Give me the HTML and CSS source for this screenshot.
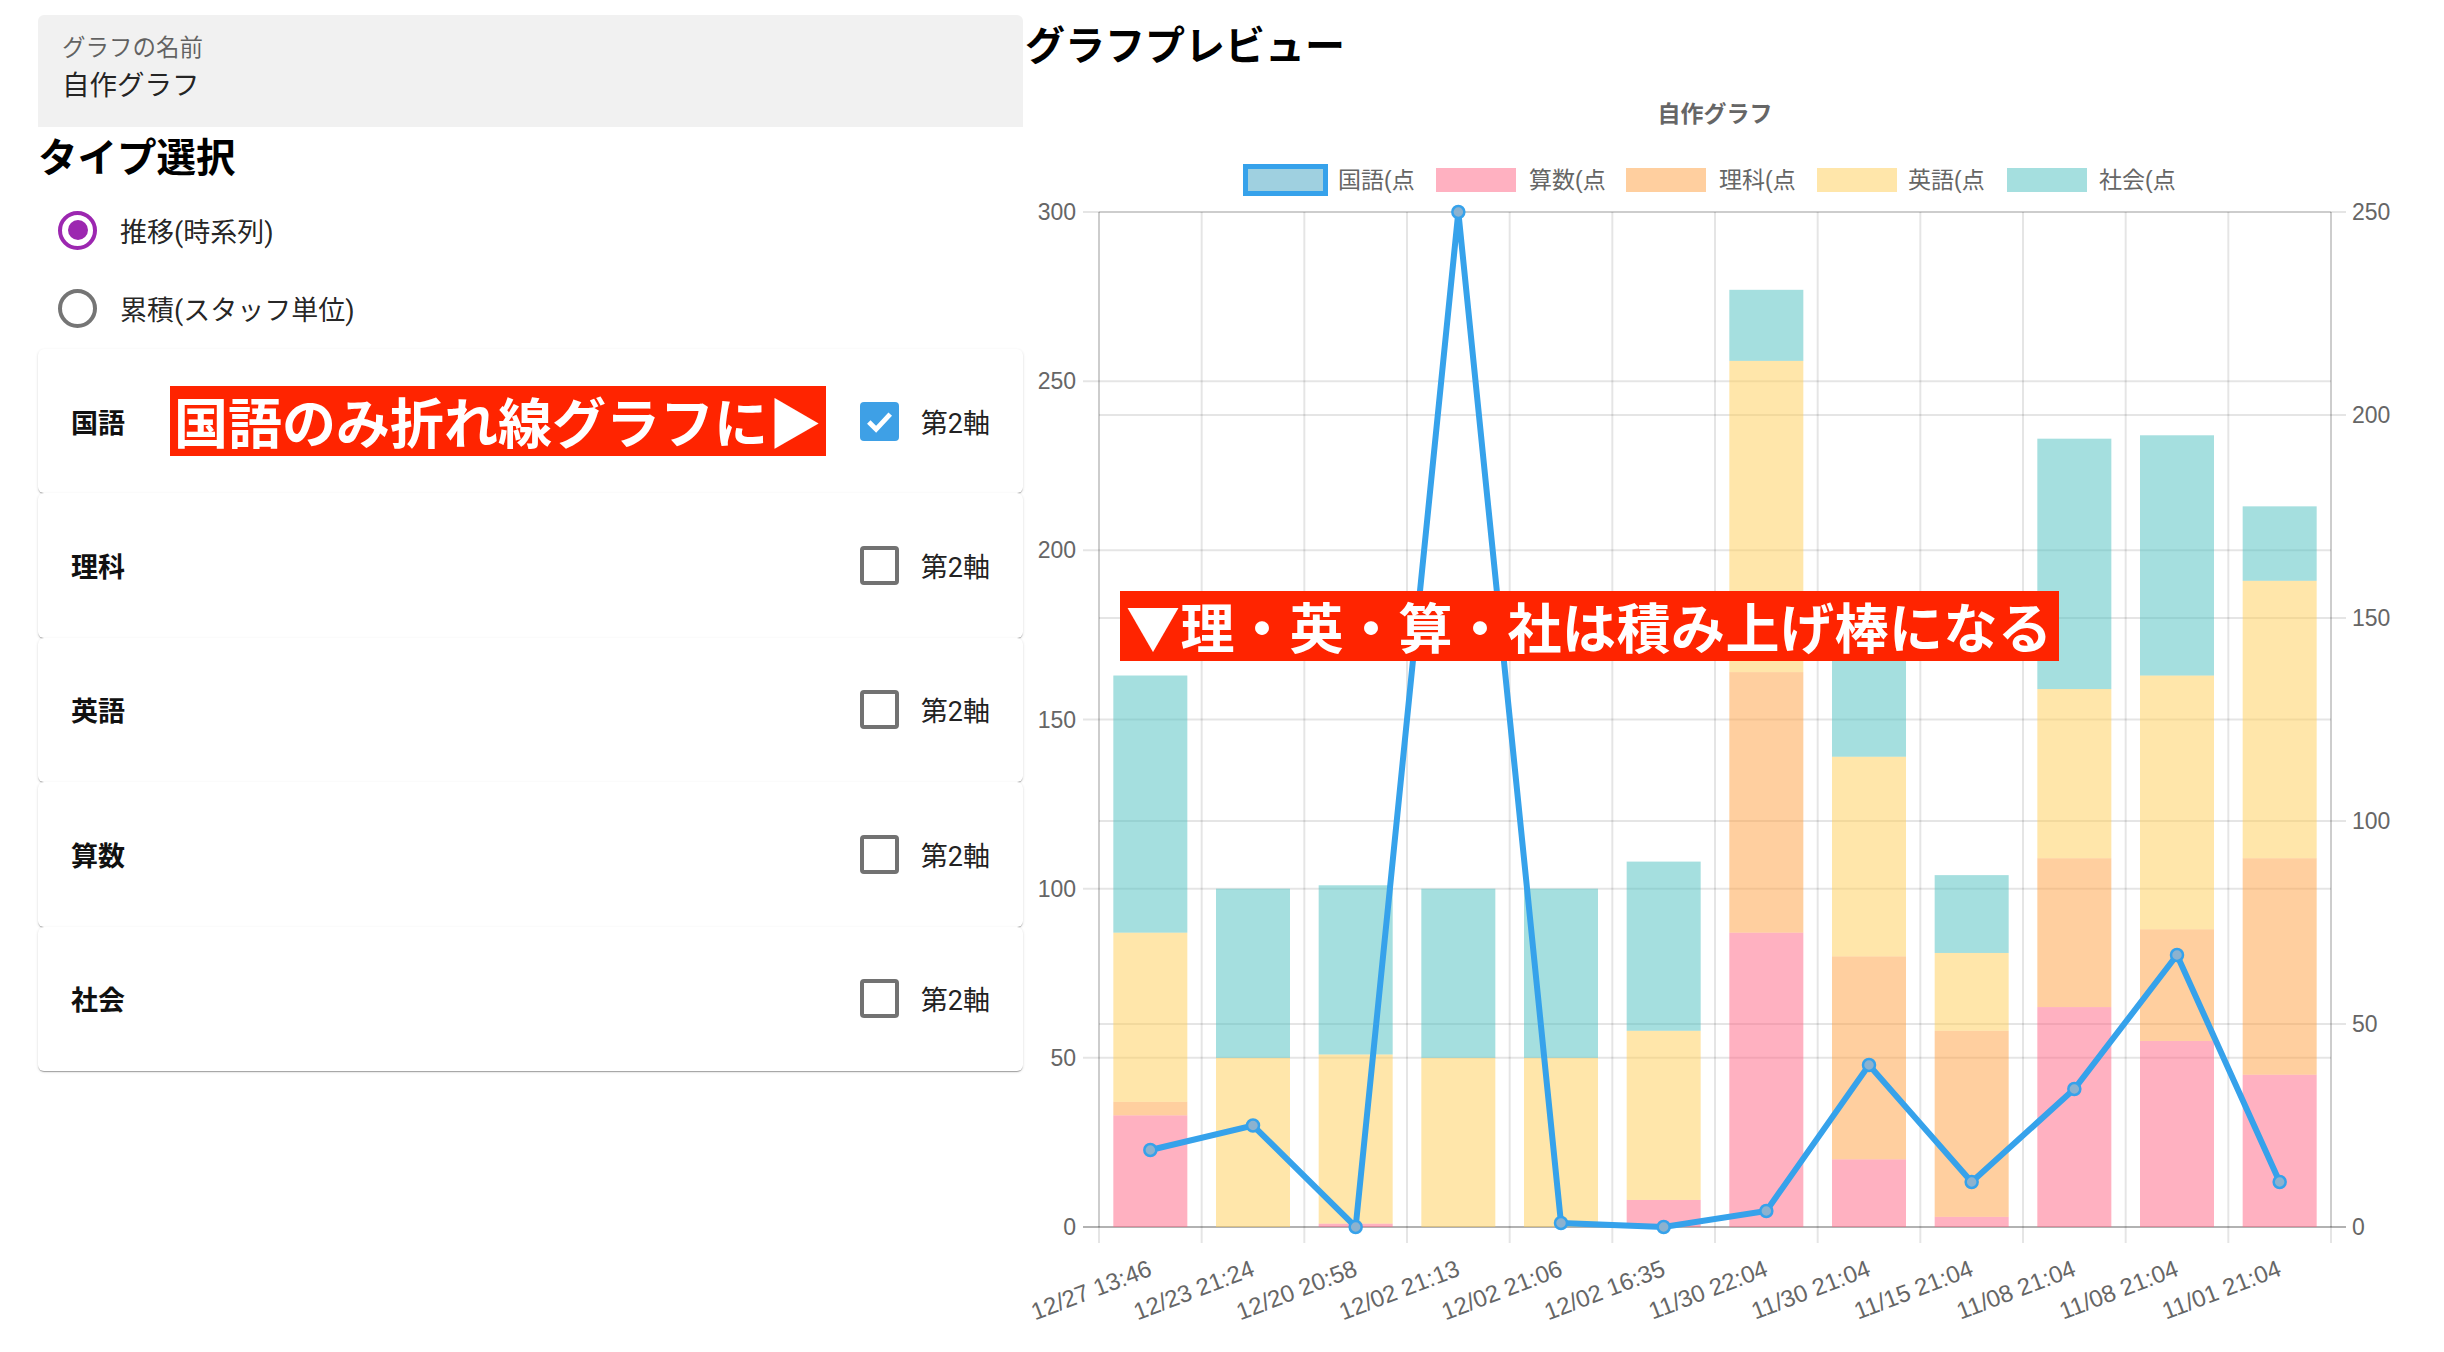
FILE: index.html
```html
<!DOCTYPE html>
<html lang="ja">
<head>
<meta charset="utf-8">
<title>グラフ設定</title>
<link rel="stylesheet" href="styles.css">
</head>
<body>
<div class="page">
  <div class="left">
    <div class="field">
      <div class="field-label">グラフの名前</div>
      <div class="field-value">自作グラフ</div>
    </div>
    <h2 class="section-title">タイプ選択</h2>
    <div class="radio-group">
      <div class="radio"><span class="radio-ring is-checked"><span class="radio-dot"></span></span><span class="radio-text">推移(時系列)</span></div>
      <div class="radio"><span class="radio-ring"></span><span class="radio-text">累積(スタッフ単位)</span></div>
    </div>
    <div class="cards">
      <div class="card">
        <span class="card-label">国語</span>
        <span class="banner">国語のみ折れ線グラフに▶</span>
        <span class="spacer"></span>
        <span class="checkbox is-checked"><svg class="check-icon" viewBox="0 0 40 40"><path d="M9 20.5 L16.5 28 L31 12.5" /></svg></span>
        <span class="axis-label">第2軸</span>
      </div>
      <div class="card">
        <span class="card-label">理科</span>
        <span class="spacer"></span>
        <span class="checkbox"></span>
        <span class="axis-label">第2軸</span>
      </div>
      <div class="card">
        <span class="card-label">英語</span>
        <span class="spacer"></span>
        <span class="checkbox"></span>
        <span class="axis-label">第2軸</span>
      </div>
      <div class="card">
        <span class="card-label">算数</span>
        <span class="spacer"></span>
        <span class="checkbox"></span>
        <span class="axis-label">第2軸</span>
      </div>
      <div class="card">
        <span class="card-label">社会</span>
        <span class="spacer"></span>
        <span class="checkbox"></span>
        <span class="axis-label">第2軸</span>
      </div>
    </div>
  </div>

  <div class="right">
    <h2 class="preview-title">グラフプレビュー</h2>
    <svg class="chart" width="1419" height="1258" viewBox="1025 94 1419 1258">
      <!-- title -->
      <text class="chart-title" x="1715" y="122" text-anchor="middle">自作グラフ</text>
      <!-- legend -->
      <rect x="1245.5" y="166.5" width="80" height="27" fill="#9fd0e0" stroke="#36a2eb" stroke-width="5"/>
      <text x="1338" y="188">国語(点</text>
      <rect x="1436" y="168" width="80" height="24" fill="#ffb1c1"/>
      <text x="1529" y="188">算数(点</text>
      <rect x="1626" y="168" width="80" height="24" fill="#ffcf9f"/>
      <text x="1719" y="188">理科(点</text>
      <rect x="1817" y="168" width="80" height="24" fill="#ffe6aa"/>
      <text x="1908" y="188">英語(点</text>
      <rect x="2007" y="168" width="80" height="24" fill="#a5dfdf"/>
      <text x="2099" y="188">社会(点</text>

      <!-- vertical grid -->
      <g class="grid">
        <line x1="1099" y1="212" x2="1099" y2="1243"/>
        <line x1="1201.67" y1="212" x2="1201.67" y2="1243"/>
        <line x1="1304.33" y1="212" x2="1304.33" y2="1243"/>
        <line x1="1407" y1="212" x2="1407" y2="1243"/>
        <line x1="1509.67" y1="212" x2="1509.67" y2="1243"/>
        <line x1="1612.33" y1="212" x2="1612.33" y2="1243"/>
        <line x1="1715" y1="212" x2="1715" y2="1243"/>
        <line x1="1817.67" y1="212" x2="1817.67" y2="1243"/>
        <line x1="1920.33" y1="212" x2="1920.33" y2="1243"/>
        <line x1="2023" y1="212" x2="2023" y2="1243"/>
        <line x1="2125.67" y1="212" x2="2125.67" y2="1243"/>
        <line x1="2228.33" y1="212" x2="2228.33" y2="1243"/>
        <line x1="2331" y1="212" x2="2331" y2="1243"/>
        <!-- axis borders -->
        <line x1="1099" y1="212" x2="1099" y2="1227"/>
        <line x1="2331" y1="212" x2="2331" y2="1227"/>
        <!-- left axis grid -->
        <line x1="1083" y1="212" x2="2331" y2="212"/>
        <line x1="1083" y1="381.17" x2="2331" y2="381.17"/>
        <line x1="1083" y1="550.33" x2="2331" y2="550.33"/>
        <line x1="1083" y1="719.5" x2="2331" y2="719.5"/>
        <line x1="1083" y1="888.67" x2="2331" y2="888.67"/>
        <line x1="1083" y1="1057.83" x2="2331" y2="1057.83"/>
        <!-- right axis grid -->
        <line x1="1099" y1="212" x2="2346" y2="212"/>
        <line x1="1099" y1="415" x2="2346" y2="415"/>
        <line x1="1099" y1="618" x2="2346" y2="618"/>
        <line x1="1099" y1="821" x2="2346" y2="821"/>
        <line x1="1099" y1="1024" x2="2346" y2="1024"/>
      </g>
      <line class="zero-line" x1="1083" y1="1227" x2="2346" y2="1227"/>

      <!-- y labels left -->
      <g class="ylabels-left" text-anchor="end">
        <text x="1076" y="220">300</text>
        <text x="1076" y="389">250</text>
        <text x="1076" y="558">200</text>
        <text x="1076" y="728">150</text>
        <text x="1076" y="897">100</text>
        <text x="1076" y="1066">50</text>
        <text x="1076" y="1235">0</text>
      </g>
      <g class="ylabels-right">
        <text x="2352" y="220">250</text>
        <text x="2352" y="423">200</text>
        <text x="2352" y="626">150</text>
        <text x="2352" y="829">100</text>
        <text x="2352" y="1032">50</text>
        <text x="2352" y="1235">0</text>
      </g>

      <!-- bars -->
      <g class="bars">
        <rect class="b-pink" x="1113.33" y="1115.35" width="74" height="111.65"/>
        <rect class="b-orange" x="1113.33" y="1101.82" width="74" height="13.53"/>
        <rect class="b-yellow" x="1113.33" y="932.65" width="74" height="169.17"/>
        <rect class="b-teal" x="1113.33" y="675.52" width="74" height="257.13"/>

        <rect class="b-yellow" x="1216" y="1057.83" width="74" height="169.17"/>
        <rect class="b-teal" x="1216" y="888.67" width="74" height="169.16"/>

        <rect class="b-pink" x="1318.67" y="1223.62" width="74" height="3.38"/>
        <rect class="b-yellow" x="1318.67" y="1054.45" width="74" height="169.17"/>
        <rect class="b-teal" x="1318.67" y="885.28" width="74" height="169.17"/>

        <rect class="b-yellow" x="1421.33" y="1057.83" width="74" height="169.17"/>
        <rect class="b-teal" x="1421.33" y="888.67" width="74" height="169.16"/>

        <rect class="b-yellow" x="1524" y="1057.83" width="74" height="169.17"/>
        <rect class="b-teal" x="1524" y="888.67" width="74" height="169.16"/>

        <rect class="b-pink" x="1626.67" y="1199.93" width="74" height="27.07"/>
        <rect class="b-yellow" x="1626.67" y="1030.77" width="74" height="169.16"/>
        <rect class="b-teal" x="1626.67" y="861.6" width="74" height="169.17"/>

        <rect class="b-pink" x="1729.33" y="932.65" width="74" height="294.35"/>
        <rect class="b-orange" x="1729.33" y="672.13" width="74" height="260.52"/>
        <rect class="b-yellow" x="1729.33" y="360.87" width="74" height="311.26"/>
        <rect class="b-teal" x="1729.33" y="289.82" width="74" height="71.05"/>

        <rect class="b-pink" x="1832" y="1159.33" width="74" height="67.67"/>
        <rect class="b-orange" x="1832" y="956.33" width="74" height="203"/>
        <rect class="b-yellow" x="1832" y="756.72" width="74" height="199.61"/>
        <rect class="b-teal" x="1832" y="634.92" width="74" height="121.8"/>

        <rect class="b-pink" x="1934.67" y="1216.85" width="74" height="10.15"/>
        <rect class="b-orange" x="1934.67" y="1030.77" width="74" height="186.08"/>
        <rect class="b-yellow" x="1934.67" y="952.95" width="74" height="77.82"/>
        <rect class="b-teal" x="1934.67" y="875.13" width="74" height="77.82"/>

        <rect class="b-pink" x="2037.33" y="1007.08" width="74" height="219.92"/>
        <rect class="b-orange" x="2037.33" y="858.22" width="74" height="148.86"/>
        <rect class="b-yellow" x="2037.33" y="689.05" width="74" height="169.17"/>
        <rect class="b-teal" x="2037.33" y="438.68" width="74" height="250.37"/>

        <rect class="b-pink" x="2140" y="1040.92" width="74" height="186.08"/>
        <rect class="b-orange" x="2140" y="929.27" width="74" height="111.65"/>
        <rect class="b-yellow" x="2140" y="675.52" width="74" height="253.75"/>
        <rect class="b-teal" x="2140" y="435.3" width="74" height="240.22"/>

        <rect class="b-pink" x="2242.67" y="1074.75" width="74" height="152.25"/>
        <rect class="b-orange" x="2242.67" y="858.22" width="74" height="216.53"/>
        <rect class="b-yellow" x="2242.67" y="580.78" width="74" height="277.44"/>
        <rect class="b-teal" x="2242.67" y="506.35" width="74" height="74.43"/>
      </g>

      <!-- line dataset -->
      <polyline class="line" points="1150.33,1150 1253,1125.5 1355.67,1227 1458.33,212 1561,1223 1663.67,1227 1766.33,1211 1869,1065 1971.67,1182 2074.33,1089 2177,955 2279.67,1182"/>
      <g class="points">
        <circle cx="1150.33" cy="1150" r="6"/>
        <circle cx="1253" cy="1125.5" r="6"/>
        <circle cx="1355.67" cy="1227" r="6"/>
        <circle cx="1458.33" cy="212" r="6"/>
        <circle cx="1561" cy="1223" r="6"/>
        <circle cx="1663.67" cy="1227" r="6"/>
        <circle cx="1766.33" cy="1211" r="6"/>
        <circle cx="1869" cy="1065" r="6"/>
        <circle cx="1971.67" cy="1182" r="6"/>
        <circle cx="2074.33" cy="1089" r="6"/>
        <circle cx="2177" cy="955" r="6"/>
        <circle cx="2279.67" cy="1182" r="6"/>
      </g>

      <!-- x labels -->
      <g class="xlabels" text-anchor="end">
        <text transform="translate(1153.33,1275) rotate(-21)">12/27 13:46</text>
        <text transform="translate(1256,1275) rotate(-21)">12/23 21:24</text>
        <text transform="translate(1358.67,1275) rotate(-21)">12/20 20:58</text>
        <text transform="translate(1461.33,1275) rotate(-21)">12/02 21:13</text>
        <text transform="translate(1564,1275) rotate(-21)">12/02 21:06</text>
        <text transform="translate(1666.67,1275) rotate(-21)">12/02 16:35</text>
        <text transform="translate(1769.33,1275) rotate(-21)">11/30 22:04</text>
        <text transform="translate(1872,1275) rotate(-21)">11/30 21:04</text>
        <text transform="translate(1974.67,1275) rotate(-21)">11/15 21:04</text>
        <text transform="translate(2077.33,1275) rotate(-21)">11/08 21:04</text>
        <text transform="translate(2180,1275) rotate(-21)">11/08 21:04</text>
        <text transform="translate(2282.67,1275) rotate(-21)">11/01 21:04</text>
      </g>
    </svg>
    <div class="banner banner-overlay">▼理・英・算・社は積み上げ棒になる</div>
  </div>
</div>
</body>
</html>
```

FILE: styles.css
```css
* { box-sizing: border-box; }

html, body {
  margin: 0;
  padding: 0;
  background: #ffffff;
}

body {
  font-family: Roboto, "Noto Sans CJK JP", sans-serif;
  color: rgba(0, 0, 0, 0.87);
}

.page {
  display: flex;
  width: 2444px;
  height: 1352px;
  overflow: hidden;
}

/* ---------- left column ---------- */
.left {
  flex: none;
  width: 985px;
  margin-left: 38px;
  padding-top: 15px;
}

.field {
  height: 112px;
  background: #f1f1f1;
  border-radius: 6px 6px 0 0;
  padding: 17px 24px 0 24px;
}

.field-label {
  font-size: 23.5px;
  line-height: 32px;
  color: rgba(0, 0, 0, 0.6);
}

.field-value {
  font-size: 27.5px;
  line-height: 44px;
  color: rgba(0, 0, 0, 0.87);
}

.section-title {
  margin: 0;
  font-size: 39.5px;
  line-height: 64px;
  font-weight: 700;
  color: #000;
}

.radio-group {
  display: flex;
  flex-direction: column;
}

.radio {
  height: 78px;
  display: flex;
  align-items: center;
  padding-left: 20px;
}

.radio-ring {
  width: 39px;
  height: 39px;
  border-radius: 50%;
  border: 4px solid #757575;
  display: flex;
  align-items: center;
  justify-content: center;
  flex: none;
}

.radio-ring.is-checked {
  border-color: #9c27b0;
}

.radio-dot {
  width: 20px;
  height: 20px;
  border-radius: 50%;
  background: #9c27b0;
}

.radio-text {
  margin-left: 23px;
  font-size: 27px;
  color: rgba(0, 0, 0, 0.87);
}

.cards {
  margin-top: 2px;
  display: flex;
  flex-direction: column;
}

.card {
  height: 144.4px;
  display: flex;
  align-items: center;
  padding: 0 33px 0 33px;
  background: #fff;
  border-radius: 6px;
  box-shadow: 0 2px 1px -1px rgba(0, 0, 0, 0.2), 0 1px 1px 0 rgba(0, 0, 0, 0.14), 0 1px 3px 0 rgba(0, 0, 0, 0.12);
}

.card-label {
  font-size: 27px;
  font-weight: 700;
  color: #111;
}

.spacer {
  flex: 1;
}

.checkbox {
  width: 39px;
  height: 39px;
  border: 4px solid #727272;
  border-radius: 4px;
  flex: none;
  margin-right: 22px;
  display: flex;
  align-items: center;
  justify-content: center;
}

.checkbox.is-checked {
  border: none;
  background: #3ea0e6;
}

.check-icon {
  width: 39px;
  height: 39px;
  fill: none;
  stroke: #fff;
  stroke-width: 5;
}

.axis-label {
  font-size: 27px;
  color: #222;
}

.banner {
  display: inline-block;
  margin-left: 45px;
  height: 70px;
  padding: 0 4px;
  background: #ff2400;
  color: #fff;
  font-family: "Noto Sans CJK JP", sans-serif;
  font-weight: 700;
  font-size: 54px;
  line-height: 70px;
  white-space: nowrap;
}

/* ---------- right column ---------- */
.right {
  flex: none;
  width: 1419px;
  margin-left: 2px;
  position: relative;
}

.preview-title {
  margin: 0;
  height: 94px;
  font-size: 40px;
  line-height: 94px;
  font-weight: 700;
  color: #000;
}

.chart {
  display: block;
}

.chart text {
  font-family: "Liberation Sans", "Noto Sans CJK JP", sans-serif;
  font-size: 23px;
  fill: #666;
}

.chart .chart-title {
  font-weight: 700;
}

.chart .xlabels text {
  font-size: 24px;
}

.grid line {
  stroke: rgba(0, 0, 0, 0.1);
  stroke-width: 2;
}

.zero-line {
  stroke: rgba(0, 0, 0, 0.3);
  stroke-width: 2;
}

.b-pink { fill: rgba(255, 99, 132, 0.5); }
.b-orange { fill: rgba(255, 159, 64, 0.5); }
.b-yellow { fill: rgba(255, 205, 86, 0.5); }
.b-teal { fill: rgba(75, 192, 192, 0.5); }

.line {
  fill: none;
  stroke: #36a2eb;
  stroke-width: 6;
  stroke-linejoin: miter;
  stroke-miterlimit: 4;
}

.points circle {
  fill: #8cb2cf;
  stroke: #36a2eb;
  stroke-width: 2.5;
}

.banner-overlay {
  position: absolute;
  left: 95px;
  top: 591px;
  margin-left: 0;
  padding: 0 6px;
  letter-spacing: 0.5px;
}
```
